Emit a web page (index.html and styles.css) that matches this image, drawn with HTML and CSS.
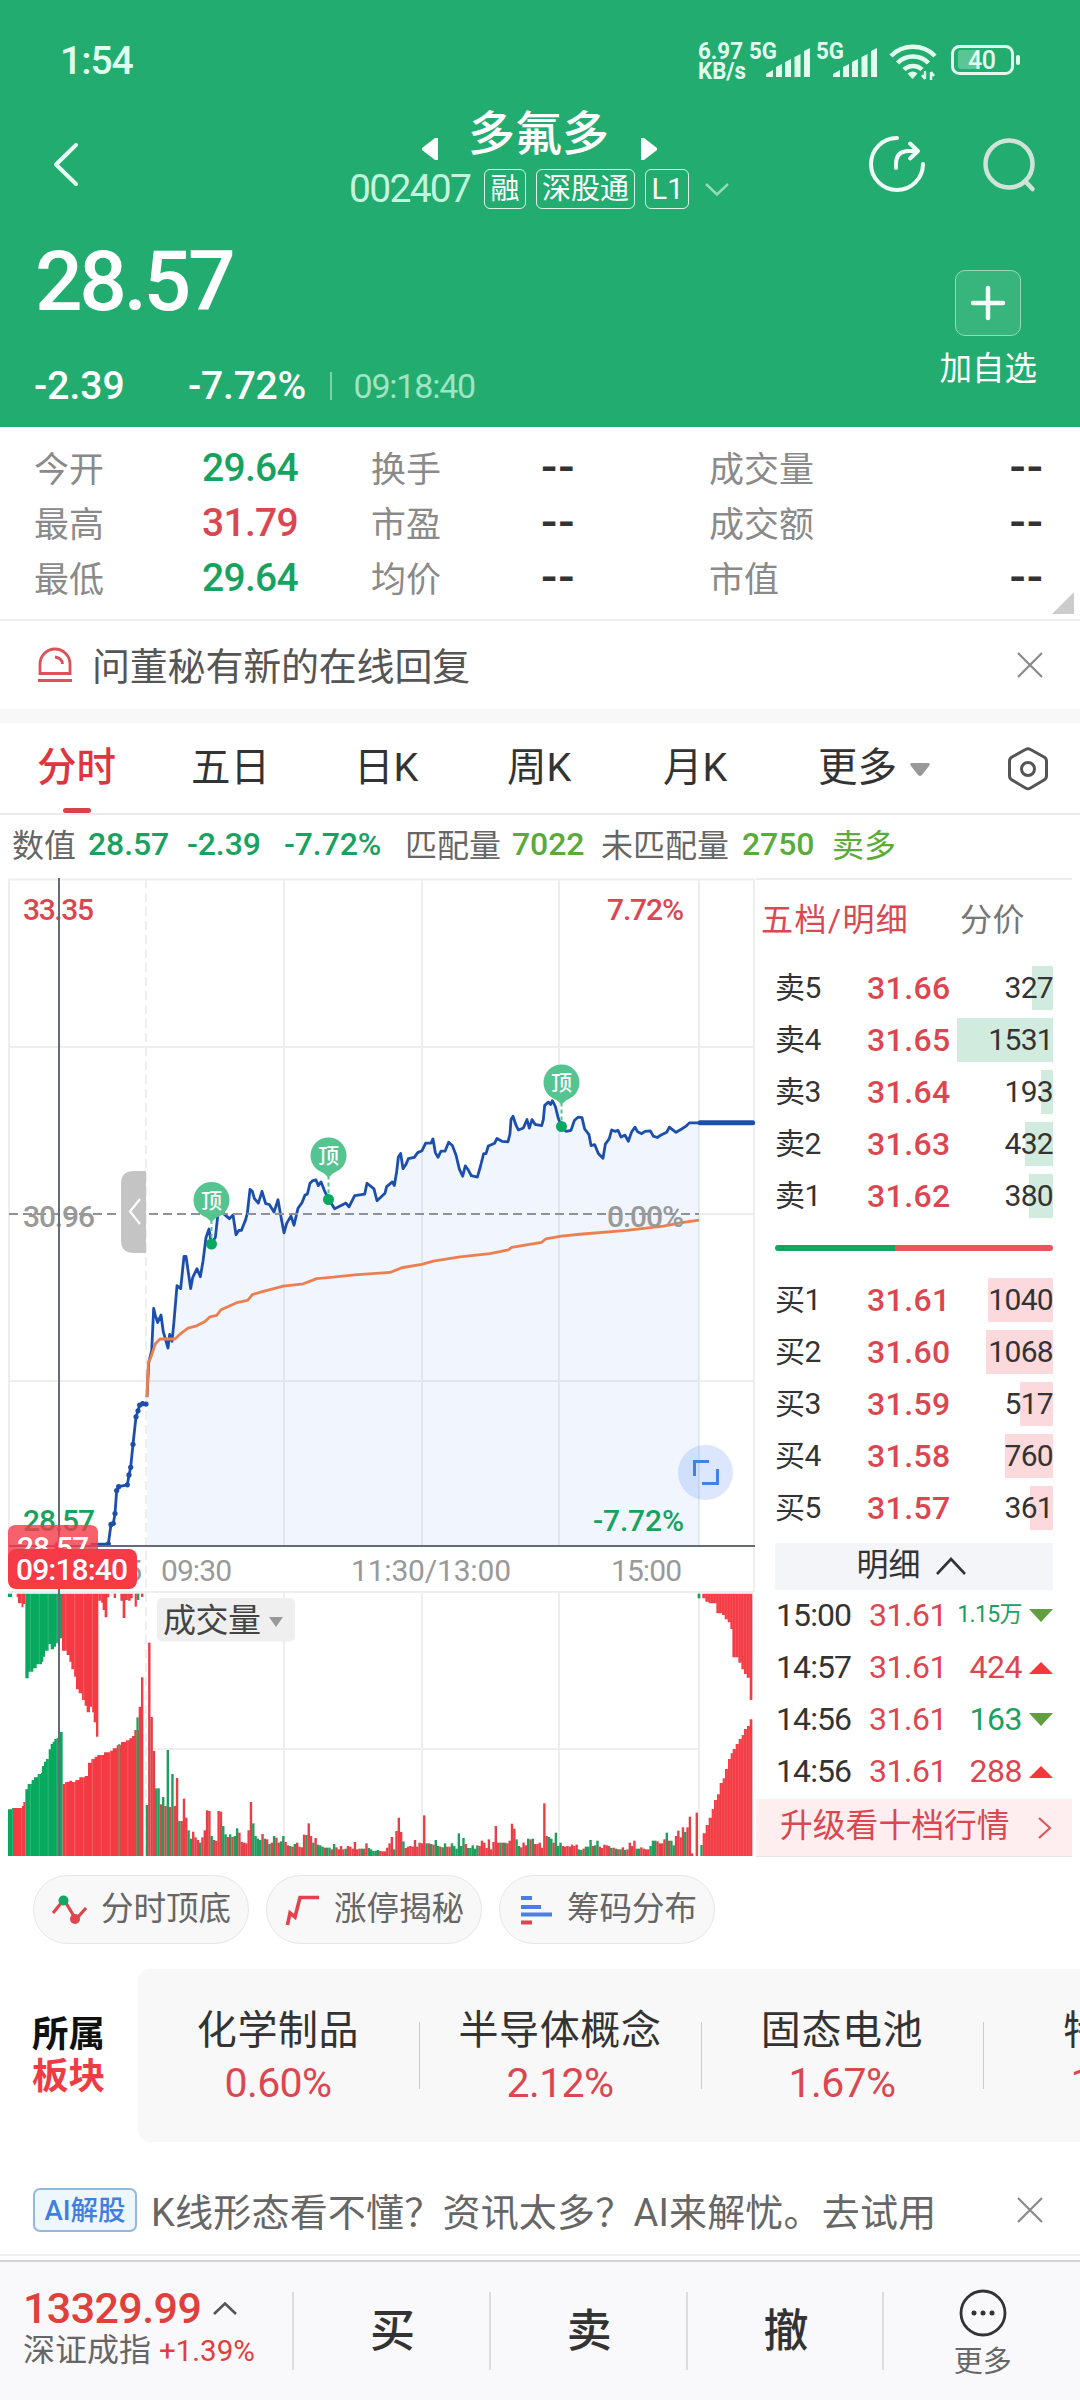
FILE: index.html
```html
<!DOCTYPE html>
<html lang="zh-CN">
<head>
<meta charset="utf-8">
<title>多氟多 002407</title>
<link rel="stylesheet" href="styles.css">
</head>
<body>
<header class="hero">
  <div class="status">
    <span class="clock">1:54</span>
    <svg class="status-icons" width="340" height="50" viewBox="690 36 340 50" fill="#e0ffef">
      <g font-weight="700" font-size="23">
        <text x="698" y="59" textLength="45" lengthAdjust="spacingAndGlyphs">6.97</text>
        <text x="698" y="79" textLength="48" lengthAdjust="spacingAndGlyphs">KB/s</text>
        <text x="749" y="59" textLength="28" lengthAdjust="spacingAndGlyphs">5G</text>
        <text x="816" y="59" textLength="28" lengthAdjust="spacingAndGlyphs">5G</text>
      </g>
      <path d="M766 77v-3l7-4v7zM776 77v-10l6-3v13zM785 77v-15l6-3v18zM794.500 77v-20l6-3v23zM804 77v-26l6-3v29z"/>
      <path d="M833 77v-3l7-4v7zM843 77v-10l6-3v13zM852 77v-15l6-3v18zM861.500 77v-20l6-3v23zM871 77v-26l6-3v29z"/>
      <g fill="none" stroke="#e0ffef" stroke-width="4.500">
        <path d="M891 56a31 31 0 0 1 44 0M897.500 63a22 22 0 0 1 31 0M904 69.500a13 13 0 0 1 18 0"/>
      </g>
      <path d="M907.500 73.500q5.500-4 10 0l-5 5.500z"/>
      <path d="M925 71v8M925 79l-3-4M931 80v-8M931 72l3 4" stroke="#e0ffef" stroke-width="2.400"/>
      <rect x="952.500" y="46.500" width="60" height="27" rx="7" fill="none" stroke="#e0ffef" stroke-width="3"/>
      <rect x="958" y="50" width="20" height="19" rx="3" fill="#5cc595"/>
      <rect x="1016" y="55" width="4" height="10" rx="2"/>
      <text x="968" y="69" font-size="25" font-weight="500" textLength="28">40</text>
    </svg>
  </div>
  <div class="nav">
    <svg class="back" width="40" height="60" viewBox="0 0 40 60" fill="none" stroke="#e8fff4" stroke-width="4" stroke-linecap="round" stroke-linejoin="round"><path d="M30 11 10 30.500 30 50"/></svg>
    <div class="title">
      <div class="title-row">
        <svg width="18" height="24" viewBox="0 0 18 24" fill="#fff"><path d="M14 1h3v22h-3L1 13v-2z"/></svg>
        <h1>多氟多</h1>
        <svg width="18" height="24" viewBox="0 0 18 24" fill="#fff"><path d="M4 1H1v22h3l13-10v-2z"/></svg>
      </div>
      <div class="code-row">
        <span class="code">002407</span><span class="tag">融</span><span class="tag">深股通</span><span class="tag">L1</span>
        <svg width="24" height="14" viewBox="0 0 24 14" fill="none" stroke="#8fdcb8" stroke-width="2.500"><path d="m1 1 11 10.500L23 1"/></svg>
      </div>
    </div>
    <div class="nav-icons">
      <svg width="60" height="60" viewBox="0 0 60 60" fill="none" stroke="#effff7" stroke-width="4" stroke-linecap="round" stroke-linejoin="round"><path d="M30 4a26 26 0 1 0 26 26M29 34v-4q0-13 13-13h9M43 9.500l8 7.500-8 7.500"/></svg>
      <svg width="60" height="60" viewBox="0 0 60 60" fill="none" stroke="#d0e3d9" stroke-width="4.500" stroke-linecap="round"><circle cx="30" cy="30" r="23.500"/><path d="m46 47 7.500 8"/></svg>
    </div>
  </div>
  <div class="quote">
    <div>
      <div class="price">28.57</div>
      <div class="change"><span class="diff">-2.39</span><span class="pct">-7.72%</span><i></i><span class="time">09:18:40</span></div>
    </div>
    <div class="fav">
      <div class="plus"><svg width="36" height="36" viewBox="0 0 36 36" stroke="#f2fff9" stroke-width="4.500" stroke-linecap="round"><path d="M18 3v30M3 18h30"/></svg></div>
      <span>加自选</span>
    </div>
  </div>
</header>

<section class="stats">
  <span>今开</span><b class="down">29.64</b><span>换手</span><b class="dash">--</b><span>成交量</span><b class="dash end">--</b>
  <span>最高</span><b class="up">31.79</b><span>市盈</span><b class="dash">--</b><span>成交额</span><b class="dash end">--</b>
  <span>最低</span><b class="down">29.64</b><span>均价</span><b class="dash">--</b><span>市值</span><b class="dash end">--</b>
  <svg class="corner" width="22" height="22" viewBox="0 0 22 22"><path d="M22 0v22H0z" fill="#ccc"/></svg>
</section>

<section class="notice">
  <svg width="36" height="36" viewBox="0 0 36 36" fill="none" stroke="#e0505a" stroke-width="2.800"><path d="M3 26.500V17a15 15 0 0 1 30 0v9.500zM1 33.500h34M18 10q7 1 7.500 7"/></svg>
  <p>问董秘有新的在线回复</p>
  <svg class="close" width="26" height="26" viewBox="0 0 26 26" stroke="#8a8a8a" stroke-width="2.200"><path d="m1 1 24 24M25 1 1 25"/></svg>
</section>

<nav class="tabs">
  <span class="on">分时</span><span>五日</span><span>日K</span><span>周K</span><span>月K</span><span>更多</span>
  <svg width="20" height="13" viewBox="0 0 20 13"><path d="M2 0h16q3 0 1 3l-7 9q-2 2-4 0L1 3Q-1 0 2 0z" fill="#999"/></svg>
  <svg width="42" height="46" viewBox="0 0 42 46" fill="none" stroke="#555" stroke-width="3" stroke-linejoin="round"><path d="M18.500 3.500q2.500-1.500 5 0L37 11q2.500 1.500 2.500 4v15q0 2.500-2.500 4l-13.500 8q-2.500 1.500-5 0L5 34q-2.500-1.500-2.500-4V15q0-2.500 2.500-4z"/><circle cx="21" cy="23" r="6.500"/></svg>
</nav>

<div class="info">
  <span>数值</span><b class="down">28.57</b><b class="down">-2.39</b><b class="down">-7.72%</b><span>匹配量</span><b class="lime">7022</b><span>未匹配量</span><b class="lime">2750</b><span class="lime">卖多</span>
</div>

<main class="board">
  <svg class="chart" width="756" height="979" viewBox="0 878 756 979">
    <g fill="none" stroke="#eeeeef" stroke-width="2">
      <path d="M9 879.500H755M9 1047H754M699 1214H754M9 1381H754M9 1592H754M146 1749H699"/>
      <path d="M9 879V1546M284 879V1546M422 879V1546M559 879V1546M699 879V1546M754 879V1592M284 1592V1856M422 1592V1856M559 1592V1856M699 1592V1856" />
      <path d="M146 879V1856" stroke-dasharray="9 5"/>
    </g>
    <svg x="0" y="860" width="760" height="740" viewBox="0 0 2280 1568" preserveAspectRatio="none" class="plot">
      <path id="area" fill="#5c92ef" fill-opacity=".09"/>
      <path id="premarket" class="line blue"/>
      <path id="price" class="line blue"/>
      <path id="average" class="line orange"/>
      <path d="M2100 557H2258" class="line blue thick"/>
    </svg>
    <g id="dots" fill="#1c4fad"></g>
    <path d="M9 1214H699" stroke="#8f9298" stroke-width="2" stroke-dasharray="9 5"/>
    <g font-size="30" font-weight="500">
      <text x="23" y="920" textLength="71" class="up">33.35</text>
      <text x="607" y="920" textLength="77" class="up">7.72%</text>
      <text x="23" y="1227" textLength="72" class="grey">30.96</text>
      <text x="607" y="1227" textLength="77" class="grey">0.00%</text>
      <text x="23" y="1531" textLength="72" class="down">28.57</text>
      <text x="593" y="1531" textLength="91" class="down">-7.72%</text>
      <g font-weight="400">
        <text x="72" y="1581" textLength="70" class="grey">09:15</text>
        <text x="161" y="1581" textLength="71" class="grey">09:30</text>
        <text x="351" y="1581" textLength="160" class="grey">11:30/13:00</text>
        <text x="611" y="1581" textLength="71" class="grey">15:00</text>
      </g>
    </g>
    <svg x="0" y="1560" width="760" height="297" viewBox="0 0 2280 891" preserveAspectRatio="none" id="volume"></svg>
    <g class="marker" transform="translate(211.500 1200)"><path d="M0 20v18" class="stem"/><path d="M-8 15 0 22l8-7z"/><circle r="18"/><circle cy="44" r="5.500" class="dot"/><text y="7.500">顶</text></g>
    <g class="marker" transform="translate(328.500 1155.500)"><path d="M0 20v18" class="stem"/><path d="M-8 15 0 22l8-7z"/><circle r="18"/><circle cy="44" r="5.500" class="dot"/><text y="7.500">顶</text></g>
    <g class="marker" transform="translate(561.500 1082.500)"><path d="M0 20v18" class="stem"/><path d="M-8 15 0 22l8-7z"/><circle r="18"/><circle cy="44" r="5.500" class="dot"/><text y="7.500">顶</text></g>
    <path d="M146 1171h-12q-13 0-13 13v56q0 13 13 13h12z" fill="#c4c4c4"/>
    <path d="m140 1199-10 12.500 10 12.500" fill="none" stroke="#fff" stroke-width="2.200"/>
    <circle cx="705.500" cy="1472.500" r="27.500" fill="#5f91f5" fill-opacity=".22"/>
    <path d="M694.500 1476v-14.500H709M702 1483.500h15.500V1469" fill="none" stroke="#4181ea" stroke-width="3"/>
    <path d="M9 1546H755M59 878V1856" stroke="#666b78" stroke-width="2" fill="none"/>
    <path d="M8 1533q0-8 8-8h74q8 0 8 8v30H8z" fill="#f43a48" fill-opacity=".8"/>
    <circle cx="59" cy="1546" r="5" fill="#f63b46"/>
    <text x="17" y="1558" font-size="30" font-weight="500" textLength="72" fill="#fff">28.57</text>
    <rect x="8" y="1549" width="129" height="40" rx="8" fill="#f63b46"/>
    <text x="16" y="1580" font-size="30" font-weight="500" textLength="112" fill="#fff">09:18:40</text>
    <rect x="157" y="1598" width="138" height="43.500" rx="5" fill="#efefef"/>
    <text x="163" y="1632" font-size="33" textLength="98" fill="#444">成交量</text>
    <path d="M269 1617h14l-7 10z" fill="#999"/>
  </svg>

  <aside class="depth">
    <div class="depth-tabs"><span class="up">五档/明细</span><span>分价</span></div>
    <div class="levels sell">
      <div><span>卖5</span><b>31.66</b><em style="--w:21px">327</em></div>
      <div><span>卖4</span><b>31.65</b><em style="--w:97px">1531</em></div>
      <div><span>卖3</span><b>31.64</b><em style="--w:12px">193</em></div>
      <div><span>卖2</span><b>31.63</b><em style="--w:28px">432</em></div>
      <div><span>卖1</span><b>31.62</b><em style="--w:24px">380</em></div>
    </div>
    <div class="ratio"><i></i><i></i></div>
    <div class="levels buy">
      <div><span>买1</span><b>31.61</b><em style="--w:65px">1040</em></div>
      <div><span>买2</span><b>31.60</b><em style="--w:67px">1068</em></div>
      <div><span>买3</span><b>31.59</b><em style="--w:33px">517</em></div>
      <div><span>买4</span><b>31.58</b><em style="--w:48px">760</em></div>
      <div><span>买5</span><b>31.57</b><em style="--w:23px">361</em></div>
    </div>
    <div class="detail-head"><span>明细</span><svg width="30" height="18" viewBox="0 0 30 18" fill="none" stroke="#333" stroke-width="2.600"><path d="M1 17 15 2l14 15"/></svg></div>
    <div class="ticks">
      <div><span>15:00</span><b>31.61</b><em class="down small">1.15万</em><svg width="24" height="14" viewBox="0 0 24 14"><path d="M0 0h24L12 13z" fill="#629e3e"/></svg></div>
      <div><span>14:57</span><b>31.61</b><em class="up">424</em><svg width="24" height="14" viewBox="0 0 24 14"><path d="M0 13h24L12 1z" fill="#f5383c"/></svg></div>
      <div><span>14:56</span><b>31.61</b><em class="down">163</em><svg width="24" height="14" viewBox="0 0 24 14"><path d="M0 0h24L12 13z" fill="#629e3e"/></svg></div>
      <div><span>14:56</span><b>31.61</b><em class="up">288</em><svg width="24" height="14" viewBox="0 0 24 14"><path d="M0 13h24L12 1z" fill="#f5383c"/></svg></div>
    </div>
    <div class="upgrade"><span>升级看十档行情</span><svg width="14" height="22" viewBox="0 0 14 22" fill="none" stroke="#e0505a" stroke-width="2"><path d="m1 1 11 10L1 21"/></svg></div>
  </aside>
</main>

<div class="pills">
  <div><svg width="36" height="32" viewBox="0 0 36 32" fill="none" stroke="#e0454f" stroke-width="3.200"><path d="m1 19 9-11M14 9l9 15M26 23l8-9"/><circle cx="11.500" cy="6.500" r="5" fill="#14a664" stroke="none"/><circle cx="23" cy="25" r="5" fill="#e0454f" stroke="none"/></svg><span>分时顶底</span></div>
  <div><svg width="36" height="32" viewBox="0 0 36 32" fill="none" stroke="#e0454f" stroke-width="3.600"><path d="M2.500 31 5 19l5 4 5-19.500h19"/></svg><span>涨停揭秘</span></div>
  <div><svg width="36" height="32" viewBox="0 0 36 32" stroke="#4a80e2" stroke-width="4"><path d="M3 4h11M3 13h20M3 20.500h31"/><path d="M3 28.500h11" stroke="#e0454f"/></svg><span>筹码分布</span></div>
</div>

<section class="sectors">
  <h2>所属<br><span>板块</span></h2>
  <div class="cards">
    <div><p>化学制品</p><b>0.60%</b></div>
    <div><p>半导体概念</p><b>2.12%</b></div>
    <div><p>固态电池</p><b>1.67%</b></div>
    <div><p>特斯拉</p><b>1.13%</b></div>
  </div>
</section>

<section class="ai">
  <span class="ai-tag">AI解股</span>
  <p>K线形态看不懂？资讯太多？AI来解忧。去试用</p>
  <svg class="close" width="26" height="26" viewBox="0 0 26 26" stroke="#8a8a8a" stroke-width="2.200"><path d="m1 1 24 24M25 1 1 25"/></svg>
</section>

<footer class="bar">
  <div class="index">
    <div class="index-value">13329.99 <svg width="24" height="13" viewBox="0 0 24 13" fill="none" stroke="#555" stroke-width="2.600"><path d="M1 12 12 1.500 23 12"/></svg></div>
    <div class="index-name">深证成指 <b>+1.39%</b></div>
  </div>
  <div class="act">买</div>
  <div class="act">卖</div>
  <div class="act">撤</div>
  <div class="more"><svg width="48" height="48" viewBox="0 0 48 48"><circle cx="24" cy="24" r="22" fill="none" stroke="#333" stroke-width="2.800"/><g fill="#333"><circle cx="15" cy="24" r="2.500"/><circle cx="24" cy="24" r="2.500"/><circle cx="33" cy="24" r="2.500"/></g></svg>更多</div>
</footer>
<script src="chart.js"></script>
</body>
</html>
```
FILE: styles.css
```css
* { box-sizing: border-box; }
body {
  margin: 0;
  width: 1080px;
  height: 2400px;
  overflow: hidden;
  background: #fff;
  color: #333;
  font-family: Roboto, "Noto Sans CJK SC", sans-serif;
}
h1, h2, p { margin: 0; font-weight: 400; }
b, em { font-weight: 500; font-style: normal; }
svg { display: block; flex: none; }
.up { color: #dc4650; fill: #dc4650; }
.down { color: #18a260; fill: #18a260; }
.lime { color: #5aab3c; }
.grey { fill: #999; }

/* header */
.hero { height: 427px; background: #22ac6f; color: #fff; }
.status { display: flex; justify-content: space-between; padding: 36px 50px 0 60px; height: 104px; }
.clock { font-size: 39px; font-weight: 500; line-height: 50px; color: #e0ffef; letter-spacing: -1px; }
.nav { display: flex; height: 112px; padding: 0 42px 0 46px; }
.back { margin-top: 30px; }
.title { flex: 1; padding-left: 263px; }
.title-row { display: flex; align-items: center; height: 62px; padding-left: 72px; }
.title-row svg { margin-top: 28px; }
.title-row h1 { width: 201px; padding-right: 2px; text-align: center; font-size: 47px; line-height: 60px; margin-top: -2px; font-weight: 500; }
.code-row { display: flex; align-items: center; height: 46px; }
.code { width: 135px; font-size: 39px; line-height: 46px; letter-spacing: -1.7px; color: #c3f5de; white-space: nowrap; }
.tag {
  height: 40px;
  padding: 0 5px 0 5.5px;
  margin-right: 10px;
  border: 1.5px solid #d8f5e7;
  border-radius: 6px;
  font-size: 29px;
  line-height: 38px;
  white-space: nowrap;
}
.code-row svg { margin: 2px 0 0 6px; }
.nav-icons { display: flex; gap: 52px; padding: 30px 0 0; width: 171px; }
.quote { display: flex; justify-content: space-between; padding: 0 43px 0 35px; }
.price { font-size: 84px; line-height: 84px; padding-top: 24px; font-weight: 500; letter-spacing: -3.4px; }
.change { display: flex; align-items: center; margin-top: 39px; height: 46px; font-size: 39px; line-height: 46px; font-weight: 500; letter-spacing: 0; }
.diff { width: 154px; margin-left: -1px; }
.pct { width: 142px; letter-spacing: -0.2px; }
.change i { width: 1.5px; height: 28px; background: #7fd1ab; }
.time { margin-left: 22px; font-size: 34px; font-weight: 400; letter-spacing: -1.2px; color: #9fe4c3; }
.fav { display: flex; flex-direction: column; align-items: center; padding-top: 54px; font-size: 32.500px; }
.plus { display: grid; place-items: center; width: 66px; height: 66px; border: 1.5px solid #92dab9; border-radius: 10px; background: #38b57d; }
.fav span { margin-top: 12px; line-height: 42px; }

/* quote figures */
.stats {
  display: grid;
  grid-template-columns: 168px 169px 170px 168px 150px 185px;
  grid-auto-rows: 55px;
  align-items: center;
  height: 194px;
  padding: 14px 36px 0 34px;
  border-bottom: 2px solid #ededed;
  position: relative;
  font-size: 35px;
  color: #8a8a8a;
}
.stats span { padding-bottom: 5px; }
.stats b { font-size: 39px; letter-spacing: -0.7px; padding-bottom: 2px; }
.stats .dash { color: #333; letter-spacing: 1px; font-size: 48px; line-height: 40px; padding-bottom: 4px; }
.stats .end { text-align: right; }
.corner { position: absolute; right: 6px; bottom: 5px; }

.notice { display: flex; align-items: center; height: 102px; padding: 0 37px; border-bottom: 14px solid #f8f8f8; }
.notice p { margin-left: 19px; padding-bottom: 4px; font-size: 38px; letter-spacing: -0.2px; color: #555; }
.close { margin-left: auto; }

.tabs { display: flex; align-items: center; height: 92px; padding-left: 37px; border-bottom: 2px solid #ebebeb; font-size: 39.500px; line-height: 90px; color: #333; position: relative; }
.tabs span { height: 90px; white-space: nowrap; }
.tabs span:nth-child(1) { width: 154px; }
.tabs span:nth-child(2) { width: 163px; }
.tabs span:nth-child(3) { width: 153px; }
.tabs span:nth-child(4) { width: 156px; }
.tabs span:nth-child(5) { width: 155px; }
.tabs span:nth-child(6) { width: 92px; }
.tabs svg { margin-top: 2px; }
.tabs svg:last-child { margin-left: 77px; }
.tabs .on { color: #e0343f; font-weight: 500; }
.tabs .on::after { content: ""; position: absolute; left: 63px; bottom: 0; width: 28px; height: 5px; border-radius: 3px; background: #dc4048; }

.info { display: flex; align-items: center; height: 63px; padding: 0 0 6px 12px; font-size: 32px; color: #666; white-space: nowrap; }
.info span { padding-bottom: 2px; }
.info b { font-size: 32px; font-weight: 500; letter-spacing: -0.1px; }
.info > :nth-child(1) { width: 76px; }
.info > :nth-child(2) { width: 99px; }
.info > :nth-child(3) { width: 97px; }
.info > :nth-child(4) { width: 121px; }
.info > :nth-child(5) { width: 107px; }
.info > :nth-child(6) { width: 89px; }
.info > :nth-child(7) { width: 141px; }
.info > :nth-child(8) { width: 90px; }
.info .lime { color: #5aab3c; }

/* chart and order book */
.board { display: flex; height: 980px; }
.line { fill: none; vector-effect: non-scaling-stroke; stroke-width: 2.8; stroke-linejoin: round; }
.blue { stroke: #1c4fad; }
.orange { stroke: #ec7f4d; }
.thick { stroke-width: 5; stroke-linecap: round; }
.marker { fill: #55c491; }
.marker .dot { fill: #0aa861; }
.marker .stem { stroke: #55c491; stroke-width: 2; stroke-dasharray: 4 3; }
.marker text { fill: #fff; font-size: 21px; font-weight: 500; text-anchor: middle; }

.depth { width: 316px; border-top: 2px solid #ededed; }
.depth-tabs { display: flex; height: 84px; padding-left: 5px; font-size: 32px; line-height: 81px; color: #777; letter-spacing: 0.6px; }
.depth-tabs span:first-child { width: 199px; letter-spacing: 1.4px; }
.levels div, .ticks div { display: flex; align-items: center; width: 278px; height: 52px; margin-left: 19px; line-height: 52px; }
.levels span { width: 91px; font-size: 30px; letter-spacing: -0.5px; }
.levels b { width: 91px; font-size: 32px; letter-spacing: 0.4px; padding-left: 1px; color: #dc4650; }
.levels em {
  flex: 1;
  height: 44px;
  font-size: 30px;
  line-height: 43px;
  font-weight: 400;
  text-align: right;
  letter-spacing: -0.7px;
  background: linear-gradient(var(--tint), var(--tint)) right / var(--w) 100% no-repeat;
}
.sell { --tint: #d1ebdf; height: 281px; }
.buy { --tint: #fbd9dc; padding-top: 23px; height: 291px; }
.sell, .buy { margin-top: -2px; }
.ratio { display: flex; width: 278px; height: 6px; margin: 2px 0 2px 19px; border-radius: 3px; overflow: hidden; }
.ratio i:first-child { width: 120px; background: #12a65f; }
.ratio i:last-child { flex: 1; background: #ea545a; }
.detail-head { display: flex; align-items: center; justify-content: center; gap: 15px; width: 278px; height: 47px; margin: 1px 0 0 19px; padding-right: 6px; background: #f3f5f9; font-size: 32px; line-height: 38px; }
.detail-head span { padding-bottom: 3px; }
.detail-head svg { margin-top: -1px; }
.ticks div { margin-left: 20px; width: 277px; }
.ticks span { width: 93px; padding-bottom: 2px; font-size: 32px; letter-spacing: -0.9px; }
.ticks b { width: 78px; padding-bottom: 2px; font-size: 32px; font-weight: 400; color: #dc4650; letter-spacing: -0.5px; }
.ticks em { flex: 1; padding-bottom: 2px; font-size: 32px; font-weight: 400; text-align: right; letter-spacing: -0.5px; margin-right: 7px; white-space: nowrap; }
.ticks .small { font-size: 23px; letter-spacing: -0.6px; }
.upgrade { display: flex; align-items: center; justify-content: space-between; height: 58px; margin-top: 1px; padding: 0 20px 0 24px; background: #feeeef; border-bottom: 1px solid #e4e4e4; font-size: 32.800px; line-height: 40px; color: #dc4650; }
.upgrade span { padding-bottom: 3px; }

/* tools */
.pills { display: flex; gap: 17px; padding: 17px 33px 0; height: 110px; }
.pills div { display: flex; align-items: center; gap: 13px; width: 216px; height: 69px; padding-left: 18px; border: 1.5px solid #e6e6e6; border-radius: 35px; background: #f8f8f8; font-size: 32.500px; line-height: 40px; color: #666; white-space: nowrap; }
.pills span { padding-bottom: 2px; }

.sectors { display: flex; height: 173px; margin: 1px 0; margin-bottom: 0; }
.sectors h2 { width: 138px; padding: 45px 0 0 32px; font-size: 36.500px; line-height: 42px; font-weight: 700; color: #111; }
.sectors h2 span { color: #ef3b44; }
.cards { display: flex; width: 942px; overflow: hidden; border-radius: 12px 0 0 12px; background: #f8f8f8; }
.cards div { flex: none; width: 282px; padding: 36px 2px 0 0; text-align: center; position: relative; }
.cards div + div::before { content: ""; position: absolute; left: -1px; top: 53px; width: 1px; height: 67px; background: #ccc; }
.cards p { font-size: 40px; line-height: 52px; letter-spacing: 0.6px; color: #333; }
.cards b { display: block; font-size: 41px; line-height: 53px; font-weight: 400; letter-spacing: -0.6px; color: #dc4650; }

.ai { display: flex; align-items: center; height: 114px; padding: 24px 37px 0 33px; border-bottom: 2px solid #efefef; }
.ai-tag { width: 104px; height: 44px; border: 2px solid #94b8e2; border-radius: 7px; background: #eff7fe; font-size: 27.500px; line-height: 42px; font-weight: 500; text-align: center; color: #3f7fe0; }
.ai p { margin-left: 14px; padding-bottom: 2px; font-size: 38px; color: #666; letter-spacing: 0.2px; white-space: nowrap; }

.bar { display: flex; height: 140px; margin-top: 4px; border-top: 2px solid #d2d2d4; background: #f9f9fb; }
.index { width: 294px; padding: 22px 0 0 23px; white-space: nowrap; }
.index-value { display: flex; align-items: center; gap: 12px; height: 48px; font-size: 43px; font-weight: 500; letter-spacing: -0.6px; color: #e0403c; }
.index-name { height: 36px; font-size: 32px; line-height: 36px; color: #666; }
.index-name b { font-size: 29.500px; font-weight: 400; color: #e0403c; }
.act, .more { position: relative; width: 197.300px; text-align: center; font-size: 45px; line-height: 139px; font-weight: 500; padding-left: 2px; }
.act::before, .more::before { content: ""; position: absolute; left: -1px; top: 30px; width: 2px; height: 78px; background: #ddd; }
.more { display: flex; flex-direction: column; align-items: center; padding-top: 27px; font-size: 29px; line-height: 50px; font-weight: 400; color: #666; }
```
FILE: chart.js
```js
// Price series: x, y pairs on the 2280 x 1568 plot grid.
const premarket = "272,1450 325,1449 333,1408 340,1406 345,1385 350,1336 356,1328 382,1324 387,1303 392,1287 399,1238 408,1180 414,1167 419,1155 428,1152 438,1153";
const morning = "441,1138 446,1065 455,1040 461,950 466,965 473,980 483,964 490,1000 504,1034 509,1005 516,1020 521,985 531,902 542,908 552,840 558,840 572,908 578,885 591,866 601,883 609,850 618,800 627,782 634,812 646,800 655,742 665,745 675,752 688,760 699,752 708,794 716,785 724,785 737,762 742,748 750,698 757,702 763,717 775,727 786,702 797,728 808,730 822,746 834,720 840,745 852,790 860,770 873,754 882,774 894,738 906,726 915,710 922,708 930,685 937,680 948,678 955,690 963,682 973,700 985,718 1004,739 1038,727 1047,735 1064,711 1094,708 1101,685 1122,697 1131,722";
const afternoon = "1155,706 1160,692 1177,682 1183,690 1190,660 1195,630 1202,622 1209,654 1218,645 1225,633 1243,630 1253,620 1266,616 1277,600 1293,600 1299,591 1306,620 1314,630 1323,617 1335,617 1346,598 1357,605 1368,625 1378,655 1388,670 1396,648 1405,657 1414,669 1432,672 1441,650 1451,622 1458,622 1465,606 1484,600 1491,590 1506,596 1524,597 1530,580 1533,550 1539,543 1548,562 1555,572 1570,568 1581,550 1588,568 1596,550 1605,560 1625,563 1630,550 1634,520 1645,513 1652,518 1657,510 1666,522 1674,545 1684,565 1698,575 1713,573 1723,552 1734,545 1746,546 1754,570 1767,582 1773,605 1784,603 1795,622 1809,632 1816,602 1828,590 1835,572 1846,575 1854,573 1863,587 1875,583 1885,596 1895,576 1905,566 1913,576 1925,580 1935,575 1951,574 1960,585 1972,588 1985,582 2000,577 2008,566 2028,577 2045,570 2058,564 2068,557 2098,557";
const average = "441,1138 445,1065 452,1055 459,1040 466,1025 480,1015 525,1015 543,1003 564,992 590,987 615,978 630,968 650,965 663,953 710,938 743,933 757,921 790,914 850,903 910,898 950,887 1000,884 1064,879 1170,874 1205,864 1265,857 1300,850 1380,841 1470,834 1525,826 1535,821 1625,810 1637,803 1685,797 1740,793 1880,785 1990,776 2050,768 2097,763";
const set = (id, d) => document.getElementById(id).setAttribute("d", d);
set("premarket", "M" + premarket);
set("price", "M" + morning + " " + afternoon);
set("average", "M" + average);
set("area", "M" + morning + " " + afternoon + "V1453H441Z");
document.getElementById("dots").innerHTML = premarket.split(" ").slice(1).map(p => {
  const [x, y] = p.split(",");
  return `<circle cx="${x / 3}" cy="${860 + y / 2.119}" r="2.6"/>`;
}).join("");

// Volume: one value per minute, negative for a falling minute.
const minutes = [-153,640,417,315,-203,-203,155,-177,150,-318,147,-246,150,234,-105,105,172,115,-77,-52,73,56,48,-40,56,77,137,135,-60,48,45,135,133,-90,-65,57,-65,57,-60,-83,70,42,40,38,77,162,-98,-60,-52,-48,66,-52,50,-36,40,-60,55,40,-44,-60,42,32,-30,28,-36,40,28,26,64,-63,98,60,-40,54,-34,-32,-28,25,-25,-25,20,-36,26,20,30,20,-22,30,28,22,42,20,22,-22,22,38,-24,-20,-15,-16,-18,15,14,14,25,38,57,-20,75,115,72,-44,24,28,30,28,48,28,40,38,122,-38,38,-36,34,-48,-30,28,-26,-38,28,28,-38,-30,-22,-68,-30,-54,36,-24,-24,-32,-22,-32,30,46,40,24,50,20,42,90,40,-40,40,-40,38,46,97,82,-50,-30,26,40,32,-52,50,-52,36,36,40,25,158,60,-57,-52,40,-70,-30,-40,30,28,30,28,34,30,34,-20,-18,22,-28,-28,-48,30,-32,-46,28,24,34,32,30,-24,25,-22,20,-20,26,-18,20,40,30,46,-22,-22,26,22,20,20,-30,-46,-46,44,38,38,50,-70,46,-46,-32,60,76,56,86,-72,86,118,8,0,130];
const RED = "#f43b44", GREEN = "#07a95e";
const BASE = 888, TOP = 101;
let out = minutes.map((v, i) => v ? `<rect x="${(437.5 + i * 6.93).toFixed(1)}" y="${BASE - Math.abs(v)}" width="7.2" height="${Math.abs(v)}" fill="${v > 0 ? "#e63f47" : "#1f9d5c"}"/>` : "").join("");

// Auction blocks: stepped outlines, each "x,y" opens a step; the last number closes the block.
function block(color, origin, steps, end) {
  const pts = steps.split(" ").map(s => s.split(",").map(Number));
  let d = `M${pts[0][0]} ${origin}`;
  pts.forEach(([x, y]) => { d += `H${x}V${y}`; });
  out += `<path d="${d}H${end}V${origin}Z" fill="${color}"/>`;
}
block(GREEN, TOP, "24,111", 36);
block(RED, TOP, "50,112 54,130 64,142 70,132", 76);
block(GREEN, TOP, "76,355 86,335 100,325 110,313 126,305 130,290 135,272 146,252 152,268 162,260 168,250 176,243 180,235", 186);
block(RED, TOP, "186,272 200,285 208,305 214,328 222,350 228,388 236,400 246,420 254,437 260,457 270,440 276,457 281,487 288,530", 295);
block(RED, TOP, "295,122 303,128 308,150 314,172 322,112", 328);
block(RED, TOP, "341,114", 348);
block(RED, TOP, "361,122 368,174 376,120 384,122 392,115", 398);
block(RED, TOP, "404,140", 411);
block(GREEN, TOP, "411,120", 418);
block(RED, TOP, "423,111", 430);
block(GREEN, BASE, "24,748 36,744", 42);
block(RED, BASE, "42,744 66,738 70,726", 76);
block(GREEN, BASE, "76,688 83,672 95,660 102,652 113,642 123,638 126,618 132,605 138,597 146,568 152,552 158,545 163,537 170,534 180,516", 188);
block(RED, BASE, "188,672 195,666 208,662 216,666 226,660 238,652 254,648 264,608 274,597 284,590 292,585 312,577 330,572 338,565 350,556 363,546 378,541 388,535 396,528 403,510 416,440 423,352", 430);
block("#7a7a48", BASE, "355,552", 361);
block("#2b9557", BASE, "409,472", 416);
block(GREEN, TOP, "2093,115", 2101);
block(RED, TOP, "2107,115 2116,125 2126,130 2149,160 2166,165 2174,178 2183,187 2191,207 2197,292 2215,308 2224,328 2232,342 2240,353 2249,420", 2257);
block(GREEN, BASE, "2101,855", 2108);
block(RED, BASE, "2108,820 2117,795 2126,773 2135,747 2142,720 2151,703 2159,669 2168,655 2175,627 2184,597 2192,580 2198,567 2207,552 2216,537 2225,525 2232,507 2241,498 2249,478", 2257);
for (let x = 38; x < 430; x += 26.6) out += `<path d="M${x} ${TOP}V${BASE}" stroke="#fff" stroke-opacity=".35" stroke-width="1.5"/>`;
for (let x = 2115; x < 2255; x += 8.3) out += `<path d="M${x} ${TOP}V${BASE}" stroke="#fff" stroke-opacity=".25" stroke-width="1.5"/>`;
document.getElementById("volume").innerHTML = out;
```
